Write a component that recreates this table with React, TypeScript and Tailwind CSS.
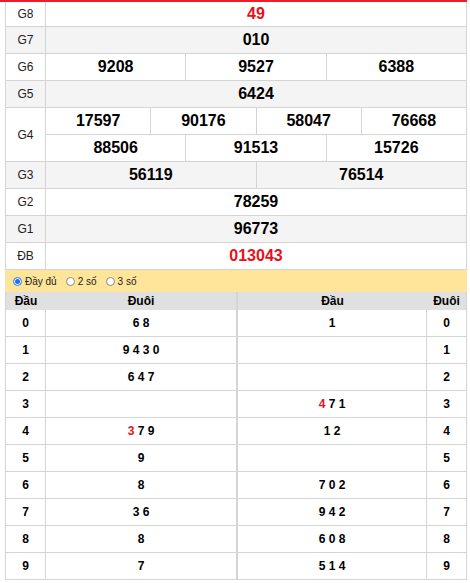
const prizes: { label: string; values: string[][]; red?: boolean; shade?: boolean }[] = [
  { label: "G8", values: [["49"]], red: true },
  { label: "G7", values: [["010"]], shade: true },
  { label: "G6", values: [["9208", "9527", "6388"]] },
  { label: "G5", values: [["6424"]], shade: true },
  {
    label: "G4",
    values: [
      ["17597", "90176", "58047", "76668"],
      ["88506", "91513", "15726"],
    ],
  },
  { label: "G3", values: [["56119", "76514"]], shade: true },
  { label: "G2", values: [["78259"]] },
  { label: "G1", values: [["96773"]], shade: true },
  { label: "ĐB", values: [["013043"]], red: true },
];

// digits per row; "!" prefix marks a red digit
const dauRows = ["6 8", "9 4 3 0", "6 4 7", "", "!3 7 9", "9", "8", "3 6", "8", "7"];
const duoiRows = ["1", "", "", "!4 7 1", "1 2", "", "7 0 2", "9 4 2", "6 0 8", "5 1 4"];

function Digits({ text }: { text: string }) {
  if (text.startsWith("!")) {
    const rest = text.slice(1);
    const first = rest.slice(0, 1);
    return (
      <span>
        <span className="text-[#e5121b]">{first}</span>
        {rest.slice(1)}
      </span>
    );
  }
  return <span>{text}</span>;
}

function Radio({ checked, label }: { checked?: boolean; label: string }) {
  return (
    <div className="flex items-center gap-[3px]">
      <span
        className={
          checked
            ? "w-[9px] h-[9px] rounded-full border border-[#1a73e8] bg-white flex items-center justify-center"
            : "w-[9px] h-[9px] rounded-full border border-[#8a8a8a] bg-white"
        }
      >
        {checked && <span className="w-[5px] h-[5px] rounded-full bg-[#1a73e8]" />}
      </span>
      <span className="text-[10px] text-[#222]">{label}</span>
    </div>
  );
}

export default function App() {
  return (
    <div className="w-[470px] h-[583px] bg-white font-['Liberation_Sans',Arial,sans-serif]">
      <div className="w-[467px] h-[2px] bg-[#ee1c25]" />
      <div className="ml-[5px] w-[462px]">
        {/* prize table */}
        <div className="border-l border-r border-[#d4d4d4]">
          {prizes.map((p, i) => (
            <div
              key={p.label}
              className={`flex border-b border-[#d4d4d4] ${p.shade ? "bg-[#f4f4f4]" : "bg-white"}`}
            >
              <div className="w-[40px] shrink-0 border-r border-[#d4d4d4] flex items-center justify-center text-[12px] text-[#222]">
                {p.label}
              </div>
              <div className="flex-1 flex flex-col">
                {p.values.map((line, j) => (
                  <div
                    key={j}
                    className={`flex ${i === 0 ? "h-[24px]" : "h-[26px]"} ${
                      j < p.values.length - 1 ? "border-b border-[#d4d4d4] h-[27px]" : ""
                    }`}
                  >
                    {line.map((v, k) => (
                      <div
                        key={k}
                        className={`flex-1 flex items-center justify-center text-[16px] font-bold ${
                          p.red ? "text-[#e5121b]" : "text-black"
                        } ${k < line.length - 1 ? "border-r border-[#d4d4d4]" : ""}`}
                      >
                        {v}
                      </div>
                    ))}
                  </div>
                ))}
              </div>
            </div>
          ))}
        </div>

        {/* options bar */}
        <div className="h-[22px] bg-[#ffe59a] flex items-center gap-[9px] pl-[8px]">
          <Radio checked label="Đầy đủ" />
          <Radio label="2 số" />
          <Radio label="3 số" />
        </div>

        {/* loto tables */}
        <div className="flex text-[12px] font-bold text-black">
          <div className="w-[232px] border-l border-r border-[#d4d4d4]">
            <div className="flex h-[18px] bg-[#e0e0e0]">
              <div className="w-[40px] flex items-center justify-center">Đầu</div>
              <div className="flex-1 flex items-center justify-center">Đuôi</div>
            </div>
            {dauRows.map((r, i) => (
              <div key={i} className="flex h-[27px] border-b border-[#d4d4d4]">
                <div className="w-[40px] border-r border-[#d4d4d4] flex items-center justify-center">{i}</div>
                <div className="flex-1 flex items-center justify-center">
                  <Digits text={r} />
                </div>
              </div>
            ))}
          </div>
          <div className="flex-1 border-l border-r border-[#d4d4d4]">
            <div className="flex h-[18px] bg-[#e0e0e0]">
              <div className="flex-1 flex items-center justify-center">Đầu</div>
              <div className="w-[39px] flex items-center justify-center">Đuôi</div>
            </div>
            {duoiRows.map((r, i) => (
              <div key={i} className="flex h-[27px] border-b border-[#d4d4d4]">
                <div className="flex-1 border-r border-[#d4d4d4] flex items-center justify-center">
                  <Digits text={r} />
                </div>
                <div className="w-[39px] flex items-center justify-center">{i}</div>
              </div>
            ))}
          </div>
        </div>
      </div>
    </div>
  );
}
